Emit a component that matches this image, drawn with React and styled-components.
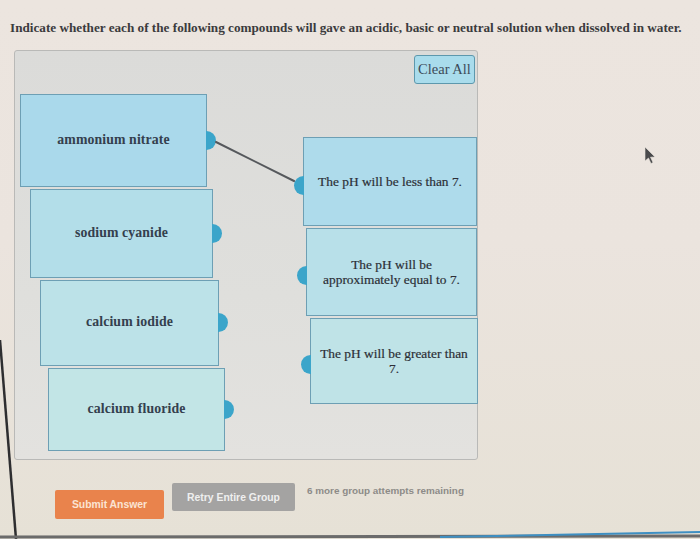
import React from "react";
import styled, { createGlobalStyle } from "styled-components";

const Global = createGlobalStyle`
  html, body { margin: 0; padding: 0; }
  body { width: 700px; height: 539px; overflow: hidden; }
`;

const Page = styled.div`
  position: relative;
  width: 700px;
  height: 539px;
  overflow: hidden;
  background: linear-gradient(180deg, #ece5df 0%, #ebe4de 45%, #e6e1d6 100%);
  font-family: "Liberation Serif", "Times New Roman", serif;
`;

const Title = styled.h1`
  margin: 0;
  padding: 20px 0 0 10px;
  font-size: 13.2px;
  line-height: 15px;
  font-weight: bold;
  color: #3b3b3d;
  white-space: nowrap;
`;

const Panel = styled.section`
  box-sizing: border-box;
  margin: 15px 0 0 14px;
  width: 464px;
  height: 410px;
  padding: 4px 2px 0 0;
  background: linear-gradient(180deg, #dbdbd9 0%, #dfdfdc 60%, #e3e2df 100%);
  border: 1px solid #b9b9b7;
  border-radius: 3px;
`;

const Header = styled.div`
  display: flex;
  justify-content: flex-end;
`;

const ClearButton = styled.button`
  box-sizing: border-box;
  width: 61px;
  height: 29px;
  padding: 0;
  background: #a9dcec;
  border: 1px solid #5d98ad;
  border-radius: 3px;
  color: #3c4a58;
  font-family: "Liberation Serif", "Times New Roman", serif;
  font-size: 14.5px;
`;

const Board = styled.div`
  position: relative;
  display: flex;
  margin-top: 10px;
`;

const Column = styled.div`
  display: flex;
  flex-direction: column;
  gap: ${(p) => p.$gap}px;
  padding-top: ${(p) => p.$top || 0}px;
  margin-left: ${(p) => p.$left || 0}px;
  width: ${(p) => p.$width}px;
`;

const Card = styled.div`
  position: relative;
  box-sizing: border-box;
  display: flex;
  align-items: center;
  justify-content: center;
  text-align: center;
  margin-left: ${(p) => p.$indent}px;
  width: ${(p) => p.$w}px;
  height: ${(p) => p.$h}px;
  padding: 0 4px;
  background: ${(p) => p.$tint};
  border: 1px solid #6d9fb4;
  color: #34404e;
`;

const Term = styled.span`
  font-size: 13.8px;
  font-weight: bold;
  letter-spacing: 0.1px;
  transform: translateY(-1px);
`;

const Match = styled.span`
  font-size: 13.4px;
  line-height: 15px;
  white-space: nowrap;
  color: #2c2f36;
  -webkit-text-stroke: 0.2px #2c2f36;
`;

/* half-round drop handle on the edge of a card */
const Handle = styled.span`
  position: absolute;
  top: calc(50% - 9px + ${(p) => (p.$side === "left" ? 3 : -1)}px);
  ${(p) => (p.$side === "left" ? "left: -10px;" : "right: -10px;")}
  width: 10px;
  height: 19px;
  background: #3ba5ca;
  border-radius: ${(p) => (p.$side === "left" ? "10px 0 0 10px" : "0 10px 10px 0")};
`;

const Links = styled.svg`
  position: absolute;
  left: 0;
  top: 0;
  width: 100%;
  height: 100%;
  overflow: visible;
  pointer-events: none;
`;

const Footer = styled.div`
  display: flex;
  align-items: flex-start;
  margin: 23px 0 0 55px;
`;

const ActionButton = styled.button`
  box-sizing: border-box;
  margin-top: ${(p) => p.$drop}px;
  margin-right: ${(p) => p.$gapAfter}px;
  width: ${(p) => p.$w}px;
  height: ${(p) => p.$h}px;
  padding: 0;
  border: none;
  border-radius: 2px;
  background: ${(p) => p.$bg};
  color: ${(p) => p.$fg};
  font-family: "Liberation Sans", Arial, sans-serif;
  font-size: 10.4px;
  font-weight: bold;
`;

const Attempts = styled.span`
  margin-top: 2px;
  font-family: "Liberation Sans", Arial, sans-serif;
  font-size: 9.9px;
  font-weight: bold;
  color: #8d8b88;
`;

const Bezel = styled.svg`
  position: absolute;
  left: 0;
  top: 0;
  width: 700px;
  height: 539px;
  pointer-events: none;
`;

const compounds = [
  { name: "ammonium nitrate", indent: 5, w: 187, h: 93, tint: "#aad9eb" },
  { name: "sodium cyanide", indent: 15, w: 183, h: 89, tint: "#b3dee9" },
  { name: "calcium iodide", indent: 25, w: 179, h: 86, tint: "#bce2e8" },
  { name: "calcium fluoride", indent: 33, w: 177, h: 83, tint: "#c2e5e6" },
];

const outcomes = [
  { text: ["The pH will be less than 7."], indent: 0, w: 174, h: 89, tint: "#aedbeb" },
  { text: ["The pH will be", "approximately equal to 7."], indent: 3, w: 171, h: 88, tint: "#b8e0e9" },
  { text: ["The pH will be greater than", "7."], indent: 7, w: 168, h: 86, tint: "#bfe3e7" },
];

export default function App() {
  return (
    <Page>
      <Global />
      <Title>
        Indicate whether each of the following compounds will gave an acidic, basic or neutral solution when dissolved in water.
      </Title>
      <Panel>
        <Header>
          <ClearButton>Clear All</ClearButton>
        </Header>
        <Board>
          <Column $gap={2} $width={210}>
            {compounds.map((c) => (
              <Card key={c.name} $indent={c.indent} $w={c.w} $h={c.h} $tint={c.tint}>
                <Term>{c.name}</Term>
                <Handle $side="right" />
              </Card>
            ))}
          </Column>
          <Column $gap={2} $top={43} $left={78} $width={174}>
            {outcomes.map((o) => (
              <Card key={o.text.join(" ")} $indent={o.indent} $w={o.w} $h={o.h} $tint={o.tint}>
                <Match>
                  {o.text.map((line, i) => (
                    <React.Fragment key={i}>
                      {i > 0 && <br />}
                      {line}
                    </React.Fragment>
                  ))}
                </Match>
                <Handle $side="left" />
              </Card>
            ))}
          </Column>
          <Links>
            <line x1="201" y1="48" x2="279" y2="87" stroke="#55585c" strokeWidth="2" strokeLinecap="round" />
          </Links>
        </Board>
      </Panel>
      <Footer>
        <ActionButton $drop={7} $gapAfter={8} $w={109} $h={29} $bg="#e9834c" $fg="#fbe3d3">
          Submit Answer
        </ActionButton>
        <ActionButton $drop={0} $gapAfter={12} $w={123} $h={28} $bg="#a4a3a2" $fg="#efefef">
          Retry Entire Group
        </ActionButton>
        <Attempts>6 more group attempts remaining</Attempts>
      </Footer>
      <Bezel viewBox="0 0 700 539">
        <path d="M0 340 L16 539" stroke="#2e2e30" strokeWidth="2.5" fill="none" />
        <path d="M0 537 L700 536" stroke="#6b6b6b" strokeWidth="3" fill="none" />
        <path d="M440 537 L700 532" stroke="#3e8fc2" strokeWidth="2" fill="none" />
        <path
          d="M645 147 L645 161 L648.5 158 L651 163.5 L653 162.5 L650.5 157.2 L655 157 Z"
          fill="#4a4a4c"
          stroke="#e8e2dc"
          strokeWidth="0.6"
        />
      </Bezel>
    </Page>
  );
}
